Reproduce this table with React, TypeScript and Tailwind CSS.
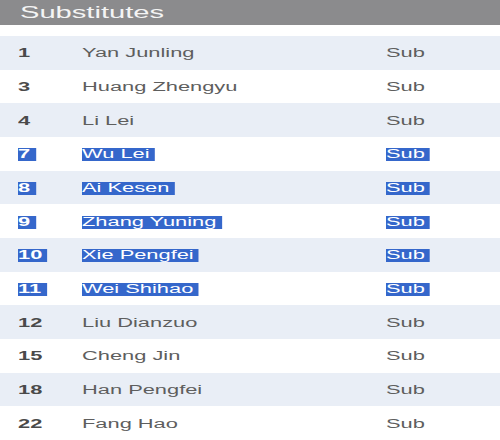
const players = [
  { no: "1", name: "Yan Junling", selected: false },
  { no: "3", name: "Huang Zhengyu", selected: false },
  { no: "4", name: "Li Lei", selected: false },
  { no: "7", name: "Wu Lei", selected: true },
  { no: "8", name: "Ai Kesen", selected: true },
  { no: "9", name: "Zhang Yuning", selected: true },
  { no: "10", name: "Xie Pengfei", selected: true },
  { no: "11", name: "Wei Shihao", selected: true },
  { no: "12", name: "Liu Dianzuo", selected: false },
  { no: "15", name: "Cheng Jin", selected: false },
  { no: "18", name: "Han Pengfei", selected: false },
  { no: "22", name: "Fang Hao", selected: false },
];

function Cell({ text, selected, bold }: { text: string; selected: boolean; bold?: boolean }) {
  return (
    <span
      className={
        "inline-block origin-left scale-x-[1.82] whitespace-pre text-[12px] leading-[13px] " +
        (bold ? "font-bold " : "") +
        (selected
          ? "bg-[#3567cb] text-white pr-[3px]"
          : bold
            ? "text-[#4a4a4a]"
            : "text-[#5e5e5e]")
      }
    >
      {text}
    </span>
  );
}

export default function App() {
  return (
    <div
      className="w-[500px] h-[440px] overflow-hidden bg-white"
      style={{ fontFamily: '"Liberation Sans", Arial, sans-serif' }}
    >
      <div className="h-[25px] bg-[#8b8b8d] flex items-center pl-[20px] pt-[1px]">
        <span className="inline-block origin-left scale-x-[1.82] text-[16px] leading-none text-[#f4f4f4]">
          Substitutes
        </span>
      </div>
      <div className="h-[11px]" />
      <div className="flex flex-col">
        {players.map((p, i) => (
          <div
            key={p.no}
            className={
              "h-[33.67px] flex items-center pl-[18px] pb-[1px] " +
              (i % 2 === 0 ? "bg-[#e9eef6]" : "bg-white")
            }
          >
            <div className="w-[64px]">
              <Cell text={p.no} selected={p.selected} bold />
            </div>
            <div className="w-[304px]">
              <Cell text={p.name} selected={p.selected} />
            </div>
            <div>
              <Cell text="Sub" selected={p.selected} />
            </div>
          </div>
        ))}
      </div>
    </div>
  );
}
